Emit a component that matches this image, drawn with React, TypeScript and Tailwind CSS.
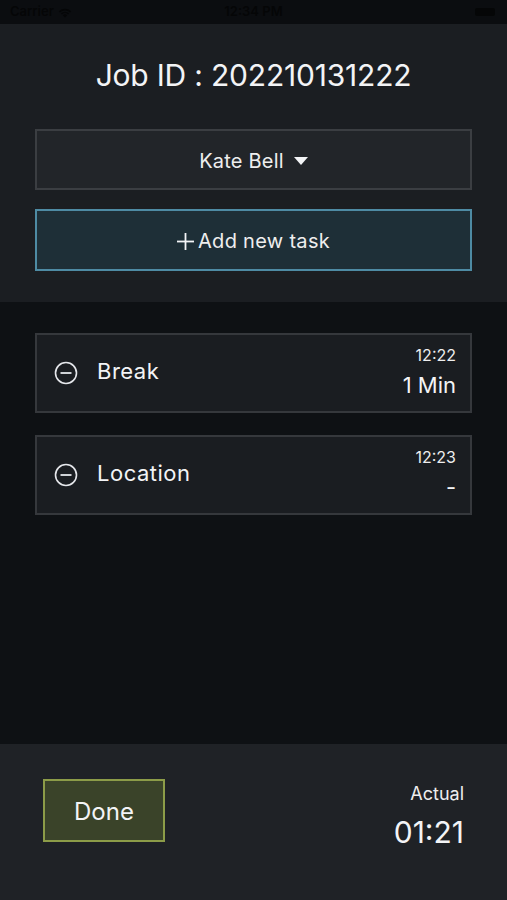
import { useState } from "react";

type Task = { name: string; time: string; duration: string };

const TASKS: Task[] = [
  { name: "Break", time: "12:22", duration: "1 Min" },
  { name: "Location", time: "12:23", duration: "-" },
];

const MinusCircle = () => (
  <svg width="24" height="24" viewBox="0 0 24 24" fill="none" className="shrink-0">
    <circle cx="12" cy="12" r="10.5" stroke="#e5e7eb" strokeWidth="1.6" />
    <line x1="6.5" y1="12" x2="17.5" y2="12" stroke="#e5e7eb" strokeWidth="1.8" />
  </svg>
);

const StatusBar = () => (
  <div className="h-6 bg-[#0b0d10] flex items-center justify-between px-[10px] text-[13px] font-semibold text-[#050607]">
    <div className="flex items-center gap-1 w-24">
      <span>Carrier</span>
      <svg width="14" height="11" viewBox="0 0 14 11" fill="#050607">
        <path d="M7 10.5 4.8 8.2a3.2 3.2 0 0 1 4.4 0Z" />
        <path d="M2.9 6.3a5.9 5.9 0 0 1 8.2 0l-1.1 1.1a4.4 4.4 0 0 0-6 0Z" />
        <path d="M.9 4.3a8.8 8.8 0 0 1 12.2 0L12 5.4a7.3 7.3 0 0 0-10 0Z" />
      </svg>
    </div>
    <span>12:34 PM</span>
    <div className="w-24 flex justify-end pr-[2px]">
      <div className="w-[20px] h-[8px] rounded-[2px] bg-[#050607]" />
    </div>
  </div>
);

export default function App() {
  const [worker] = useState("Kate Bell");

  return (
    <div
      className="w-[507px] h-[900px] flex flex-col bg-[#0e1114] text-white overflow-hidden"
      style={{ fontFamily: "Inter, 'Noto Sans', sans-serif" }}
    >
      <StatusBar />

      {/* Header */}
      <div className="bg-[#1b1e22] px-[35px] pt-[32px] pb-[31px] flex flex-col">
        <h1 className="text-center text-[30px] font-normal tracking-[-0.2px] text-[#f3f4f6] leading-[38px]">
          Job ID : 202210131222
        </h1>
        <button className="mt-[35px] h-[61px] pt-[3px] bg-[#222529] border-2 border-[#3b3e42] flex items-center justify-center gap-[10px] text-[20px] tracking-[0.2px] text-[#eeeeee]">
          <span>{worker}</span>
          <svg width="14" height="9" viewBox="0 0 14 9" fill="#f3f4f6">
            <path d="M0 0h14L7 8Z" />
          </svg>
        </button>
        <button className="mt-[19px] h-[62px] pt-[2px] bg-[#1e2f37] border-2 border-[#4e8ba4] flex items-center justify-center gap-[4px] text-[20px] tracking-[0.3px] text-[#eeeeee]">
          <svg width="17" height="17" viewBox="0 0 17 17" stroke="#f3f4f6" strokeWidth="1.8">
            <line x1="8.5" y1="0" x2="8.5" y2="17" />
            <line x1="0" y1="8.5" x2="17" y2="8.5" />
          </svg>
          <span>Add new task</span>
        </button>
      </div>

      {/* Task list */}
      <div className="flex-1 px-[35px] pt-[31px] flex flex-col gap-[22px]">
        {TASKS.map((t) => (
          <div
            key={t.name}
            className="h-[80px] bg-[#1a1d21] border-2 border-[#35383c] flex items-center pl-[17px] pr-[14px]"
          >
            <MinusCircle />
            <span className="ml-[19px] pb-[4px] text-[22px] tracking-[0.5px] text-[#f3f4f6]">{t.name}</span>
            <div className="ml-auto flex flex-col items-end self-start pt-[10px]">
              <span className="text-[16px] leading-[20px] text-[#eeeeee]">{t.time}</span>
              <span className="text-[22px] leading-[28px] mt-[6px] text-[#f3f4f6]">{t.duration}</span>
            </div>
          </div>
        ))}
      </div>

      {/* Footer */}
      <div className="h-[156px] bg-[#1f2226] flex items-start justify-between pl-[43px] pr-[43px] pt-[35px]">
        <button className="w-[122px] h-[63px] pt-[2px] bg-[#3a4329] border-2 border-[#8c9c48] text-[24px] text-[#f3f4f6]">
          Done
        </button>
        <div className="flex flex-col items-end pt-[4px]">
          <span className="text-[18px] leading-[22px] text-[#eeeeee]">Actual</span>
          <span className="text-[30px] leading-[38px] mt-[8px] text-[#f3f4f6]">01:21</span>
        </div>
      </div>
    </div>
  );
}
